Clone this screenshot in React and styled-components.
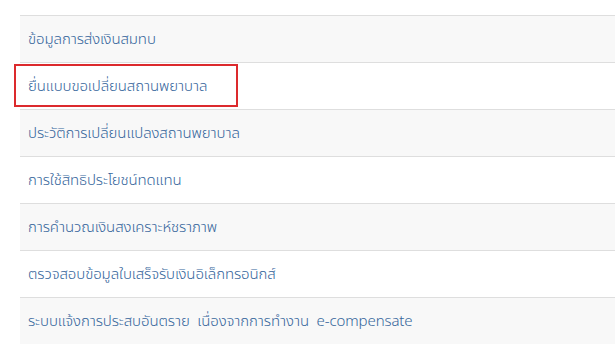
import React from "react";
import styled, { createGlobalStyle } from "styled-components";

const Global = createGlobalStyle`
  html, body { margin: 0; padding: 0; background: #fff; }
  body { font-family: "Noto Sans", "Noto Sans Thai", "Liberation Sans", sans-serif; }
`;

const Page = styled.div`
  width: 615px;
  height: 347px;
  overflow: hidden;
  padding: 15px 0 0 20px;
  box-sizing: border-box;
`;

const List = styled.ul`
  list-style: none;
  margin: 0;
  padding: 0;
`;

const Item = styled.li`
  position: relative;
  height: 46px;
  border-top: 1px solid #dedede;
  background: ${(p) => (p.$striped ? "#f8f8f8" : "#ffffff")};
  display: flex;
  align-items: center;
  padding-left: 8px;
  color: #35659b;
  font-size: 15px;
  font-weight: 300;
  letter-spacing: -0.1px;
  white-space: pre;
`;

const Highlight = styled.span`
  position: absolute;
  left: -6px;
  top: 1px;
  width: 220px;
  height: 39px;
  border: 2px solid #dc2a2d;
  pointer-events: none;
`;

const items = [
  "ข้อมูลการส่งเงินสมทบ",
  "ยื่นแบบขอเปลี่ยนสถานพยาบาล",
  "ประวัติการเปลี่ยนแปลงสถานพยาบาล",
  "การใช้สิทธิประโยชน์ทดแทน",
  "การคำนวณเงินสงเคราะห์ชราภาพ",
  "ตรวจสอบข้อมูลใบเสร็จรับเงินอิเล็กทรอนิกส์",
  "ระบบแจ้งการประสบอันตราย  เนื่องจากการทำงาน  e-compensate",
];

export default function App() {
  return (
    <>
      <Global />
      <Page>
        <List>
          {items.map((t, i) => (
            <Item key={i} $striped={i % 2 === 0}>
              {t}
              {i === 1 && <Highlight />}
            </Item>
          ))}
        </List>
      </Page>
    </>
  );
}
